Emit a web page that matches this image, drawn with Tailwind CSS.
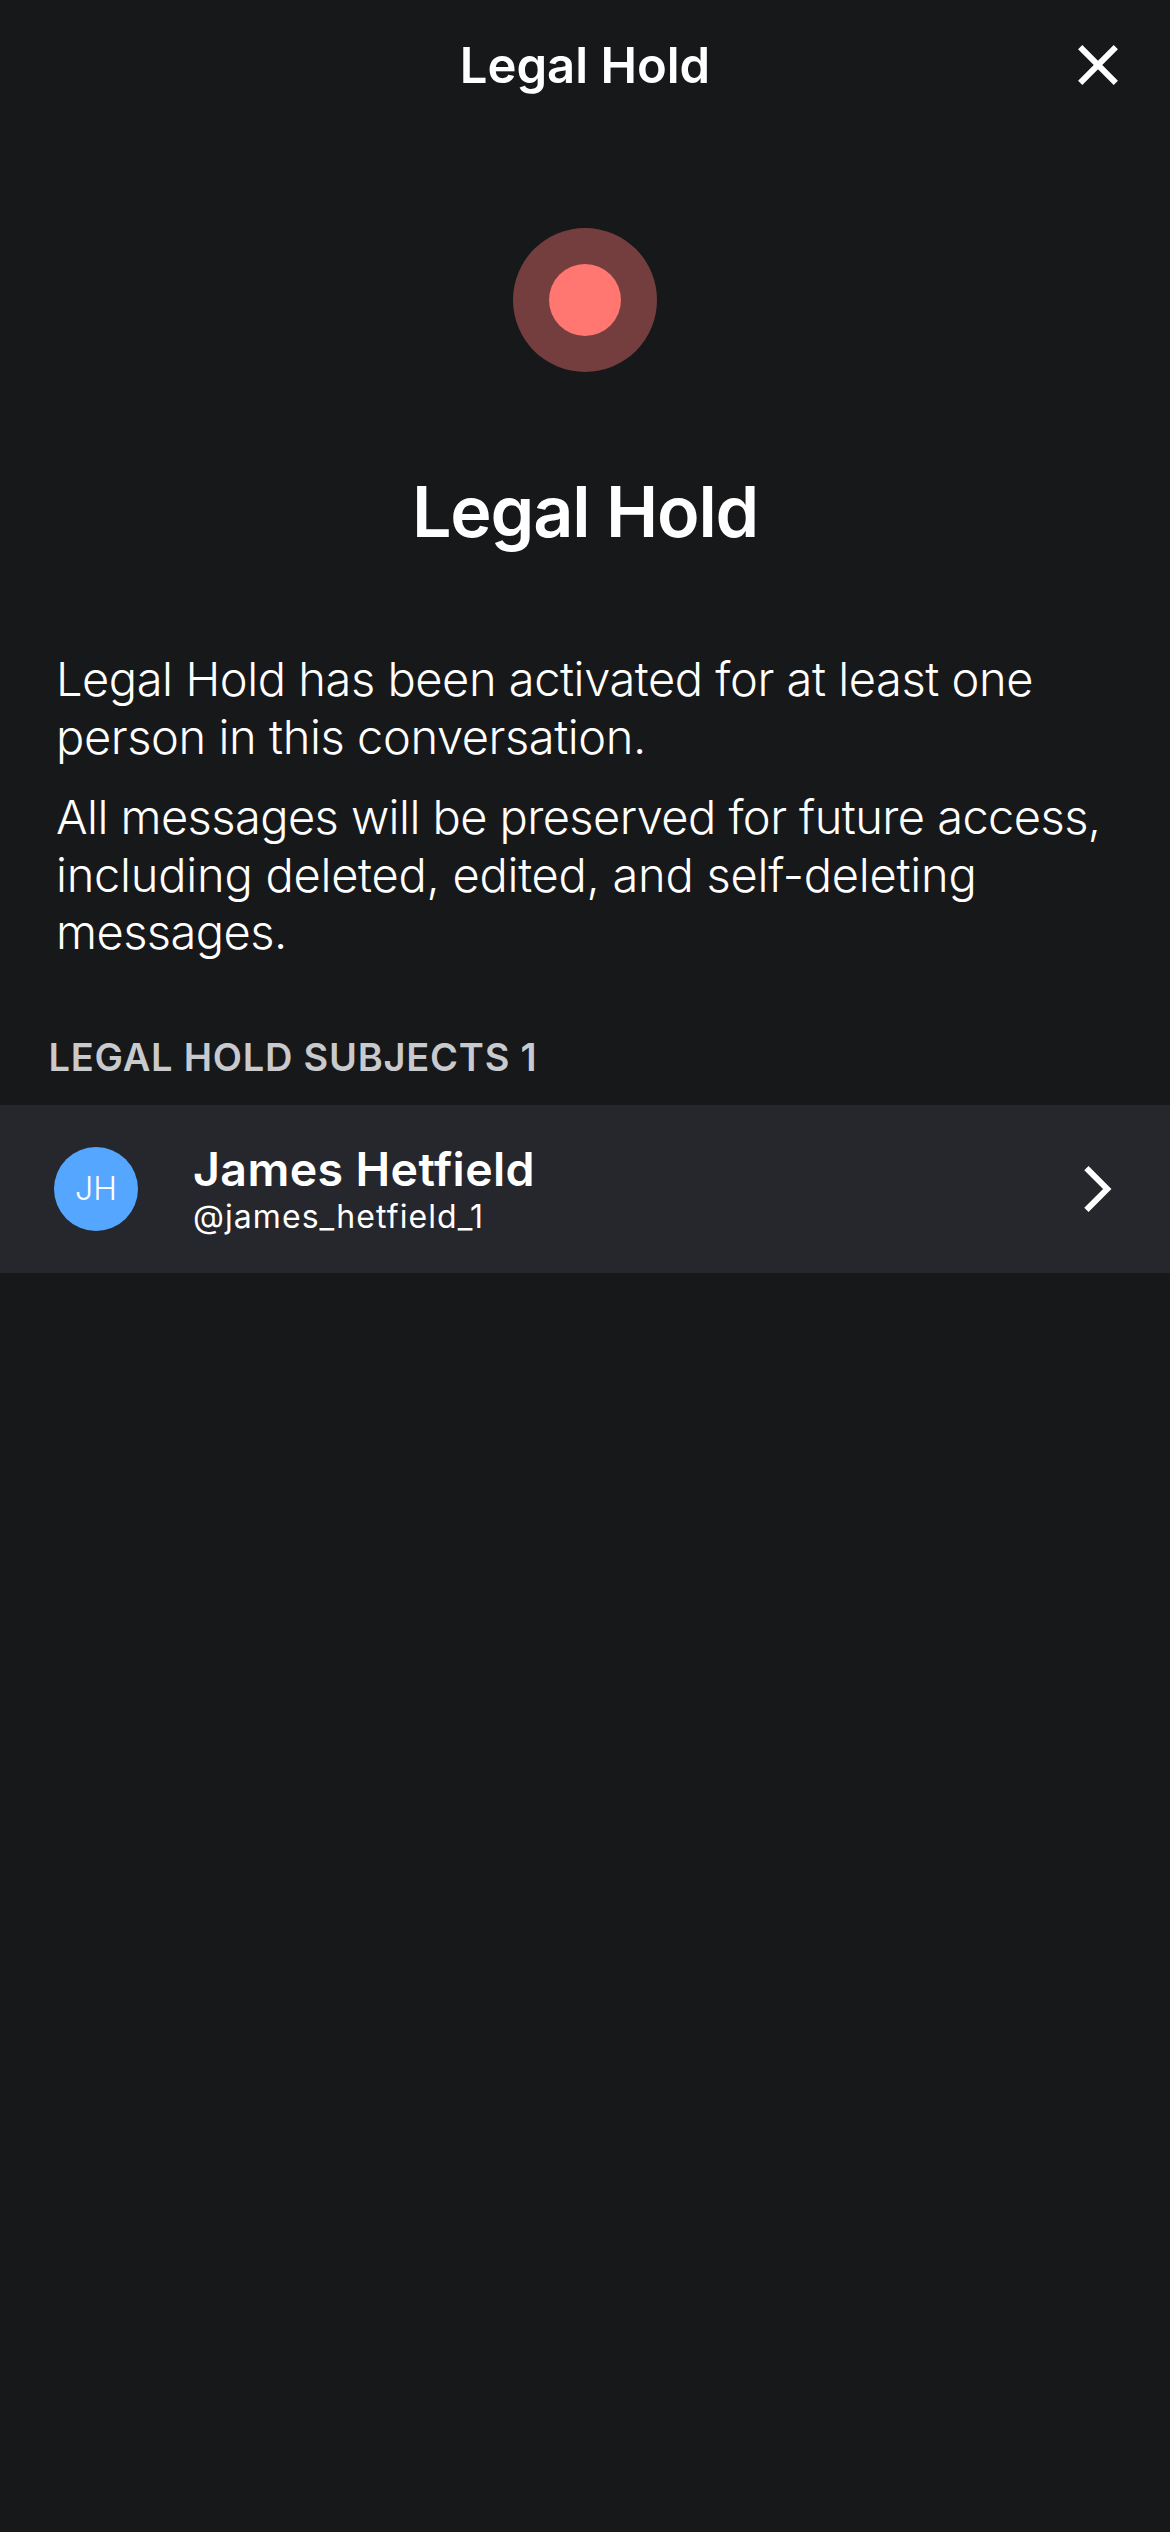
<!DOCTYPE html>
<html lang="en"><head><meta charset="utf-8"><title>Legal Hold</title>
<script src="https://cdn.jsdelivr.net/npm/@tailwindcss/browser@4"></script></head>
<body class="bg-[#17181a] text-white font-['Inter',sans-serif]">
<main class="flex h-[2532px] w-[1170px] flex-col overflow-hidden whitespace-nowrap">
<header class="grid h-[132px] grid-cols-[1fr_auto_1fr] items-center">
<span></span><h1 class="text-[49px] leading-[60px] font-semibold">Legal Hold</h1>
<button class="mr-[48px] mb-[2px] justify-self-end" aria-label="Close"><svg class="block" width="48" height="48" viewBox="0 0 48 48" fill="none" stroke="white" stroke-width="6"><path d="M6.2 6.2 41.8 41.8M41.8 6.2 6.2 41.8"/></svg></button>
</header>
<div class="mt-[96px] flex size-[144px] items-center justify-center self-center rounded-full bg-[#743e3e]"><div class="size-[72px] rounded-full bg-[#ff7770]"></div></div>
<h2 class="mt-[95px] h-[90px] text-center text-[70px] leading-[90px] font-semibold tracking-[-1.15px]">Legal Hold</h2>
<section class="mt-[93px] ml-[56px] text-[47px] leading-[57.5px] font-light">
<p><span class="tracking-[-0.45px]">Legal Hold has been activated for at least one</span><br><span class="tracking-[-0.42px]">person in this conversation.</span></p>
<p class="mt-[23px]"><span class="tracking-[-0.58px]">All messages will be preserved for future access,</span><br><span class="tracking-[-0.26px]">including deleted, edited, and self-deleting</span><br><span class="tracking-[-0.55px]">messages.</span></p>
</section>
<h3 class="mt-[72.5px] ml-[48.5px] h-[72px] text-[38px] leading-[48px] font-semibold tracking-[0.76px] text-[#c9cacd]">LEGAL HOLD SUBJECTS 1</h3>
<div class="flex h-[168px] items-center bg-[#26272c] px-[54px]">
<div class="flex size-[84px] items-center justify-center rounded-full bg-[#54a6ff] text-[32px] font-light">JH</div>
<div class="mt-[2px] ml-[55px] flex-1"><div class="text-[46.5px] leading-[54px] font-semibold tracking-[0.38px]">James Hetfield</div><div class="text-[32px] leading-[42px] tracking-[1.07px]">@james_hetfield_1</div></div>
<svg width="36" height="48" viewBox="0 0 36 48" fill="none" stroke="white" stroke-width="6"><path d="M6.4 3.2 27.2 24 6.4 44.8"/></svg>
</div>
</main></body></html>
